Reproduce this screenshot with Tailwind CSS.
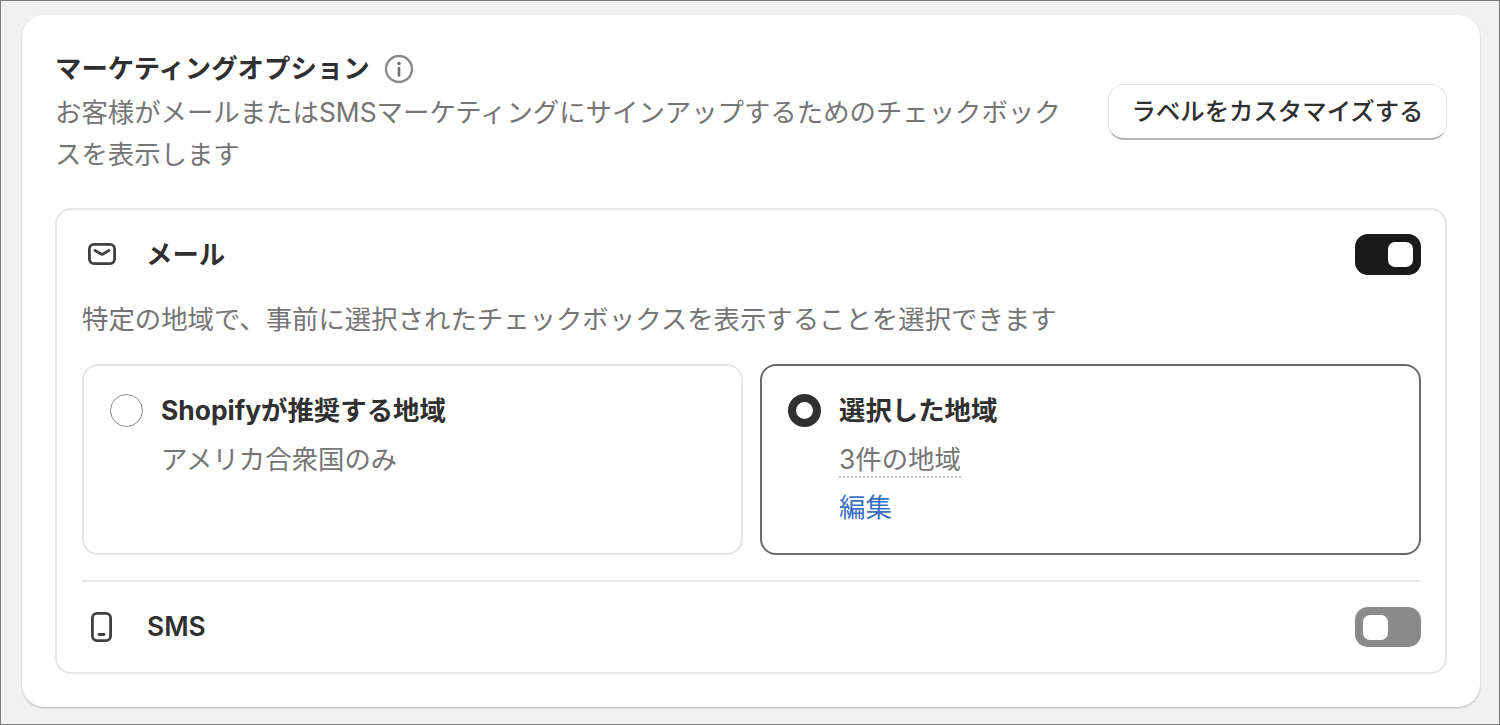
<!DOCTYPE html>
<html lang="ja">
<head>
    <meta charset="UTF-8">
    <title>マーケティングオプション</title>
    <script src="https://cdn.jsdelivr.net/npm/@tailwindcss/browser@4"></script>
</head>
<body class="bg-white">
    <!-- Page frame -->
    <div class="w-[1500px] h-[725px] overflow-hidden border border-[#7a7a7a] bg-[#f1f1f1] pt-[14px] pl-[21px] pr-[19px] font-['Inter','Noto_Sans_CJK_JP',sans-serif] text-[26.4px] text-[#303030]">
        <div class="h-[692px] rounded-[22px] bg-white shadow-[0_1px_2px_rgba(0,0,0,0.25)] pt-[33px] px-[33px]">

            <!-- Header -->
            <div class="flex justify-between">
                <div class="w-[1012px]">
                    <div class="flex items-center h-[40px]">
                        <h1 class="font-bold leading-[40px]">マーケティングオプション</h1>
                        <svg class="ml-[14px] mt-[2px] w-[30px] h-[30px]" viewBox="0 0 30 30" fill="none">
                            <circle cx="15" cy="15" r="13" stroke="#8a8a8a" stroke-width="2.4"/>
                            <circle cx="15" cy="9.5" r="1.8" fill="#6f6f6f"/>
                            <path d="M15 14v7.5" stroke="#6f6f6f" stroke-width="2.6" stroke-linecap="round"/>
                        </svg>
                    </div>
                    <p class="leading-[42px] text-[#757575] mt-[3px]">お客様がメールまたはSMSマーケティングにサインアップするためのチェックボックスを表示します</p>
                </div>
                <button class="mt-[36px] h-[56px] w-[339px] rounded-[16px] bg-white border border-[#e3e3e3] border-b-2 border-b-[#b5b5b5] text-[24.4px] font-medium text-center">ラベルをカスタマイズする</button>
            </div>

            <!-- Channel card -->
            <div class="mt-[33px] h-[466px] rounded-[16px] border-2 border-[#e6e6e6] pl-[25px] pr-[24px]">
                <!-- Email row -->
                <div class="flex items-center justify-between pt-[23px] h-[66px]">
                    <div class="flex items-center">
                        <svg class="ml-[4px] w-[32px] h-[32px] mr-[28px]" viewBox="0 0 32 32" fill="none" stroke="#404040" stroke-width="2.8">
                            <rect x="3.4" y="6.4" width="25.2" height="19.2" rx="4.5"/>
                            <path d="M9 12.5l6 3.5a2 2 0 0 0 2 0l6-3.5" stroke-linecap="round"/>
                        </svg>
                        <span class="font-bold">メール</span>
                    </div>
                    <div class="flex items-center justify-end w-[66px] h-[41px] rounded-[13px] bg-[#1a1a1a] pr-[8px]">
                        <span class="block w-[25px] h-[25px] rounded-[7px] bg-white"></span>
                    </div>
                </div>

                <p class="mt-[23px] leading-[40px] text-[#757575] whitespace-nowrap">特定の地域で、事前に選択されたチェックボックスを表示することを選択できます</p>

                <!-- Region choices -->
                <div class="grid grid-cols-[661px_661px] gap-x-[17px] mt-[25px]">
                    <div class="h-[191px] rounded-[16px] border-2 border-[#e6e6e6] flex pl-[26px] pt-[28px]">
                        <span class="block w-[33px] h-[33px] rounded-full border-[1.5px] border-[#8a8a8a] shrink-0"></span>
                        <div class="ml-[18px]">
                            <div class="font-bold leading-[33px]">Shopifyが推奨する地域</div>
                            <div class="mt-[16px] leading-[33px] text-[#757575]">アメリカ合衆国のみ</div>
                        </div>
                    </div>
                    <div class="h-[191px] rounded-[16px] border-2 border-[#6b6b6b] flex pl-[26px] pt-[28px]">
                        <span class="block w-[33px] h-[33px] rounded-full border-[8px] border-[#303030] shrink-0"></span>
                        <div class="ml-[18px]">
                            <div class="font-bold leading-[33px]">選択した地域</div>
                            <div class="mt-[16px] h-[35px] leading-[33px] text-[#757575] w-fit border-b-2 border-dotted border-[#c4c4c4]">3件の地域</div>
                            <div class="mt-[13px] leading-[33px] text-[#3b6fc4]">編集</div>
                        </div>
                    </div>
                </div>

                <hr class="mt-[25px] border-t-2 border-[#e8e8e8]">

                <!-- SMS row -->
                <div class="flex items-center justify-between mt-[25px]">
                    <div class="flex items-center">
                        <svg class="ml-[4px] w-[32px] h-[32px] mr-[29px]" viewBox="0 0 32 32" fill="none" stroke="#404040" stroke-width="2.8">
                            <rect x="6.4" y="2.4" width="18.2" height="27.2" rx="4.5"/>
                            <path d="M13 23.5h5" stroke-linecap="round"/>
                        </svg>
                        <span class="font-semibold">SMS</span>
                    </div>
                    <div class="flex items-center w-[66px] h-[40px] rounded-[13px] bg-[#8a8a8a] pl-[8px]">
                        <span class="block w-[25px] h-[25px] rounded-[7px] bg-white"></span>
                    </div>
                </div>
            </div>
        </div>
    </div>
</body>
</html>
